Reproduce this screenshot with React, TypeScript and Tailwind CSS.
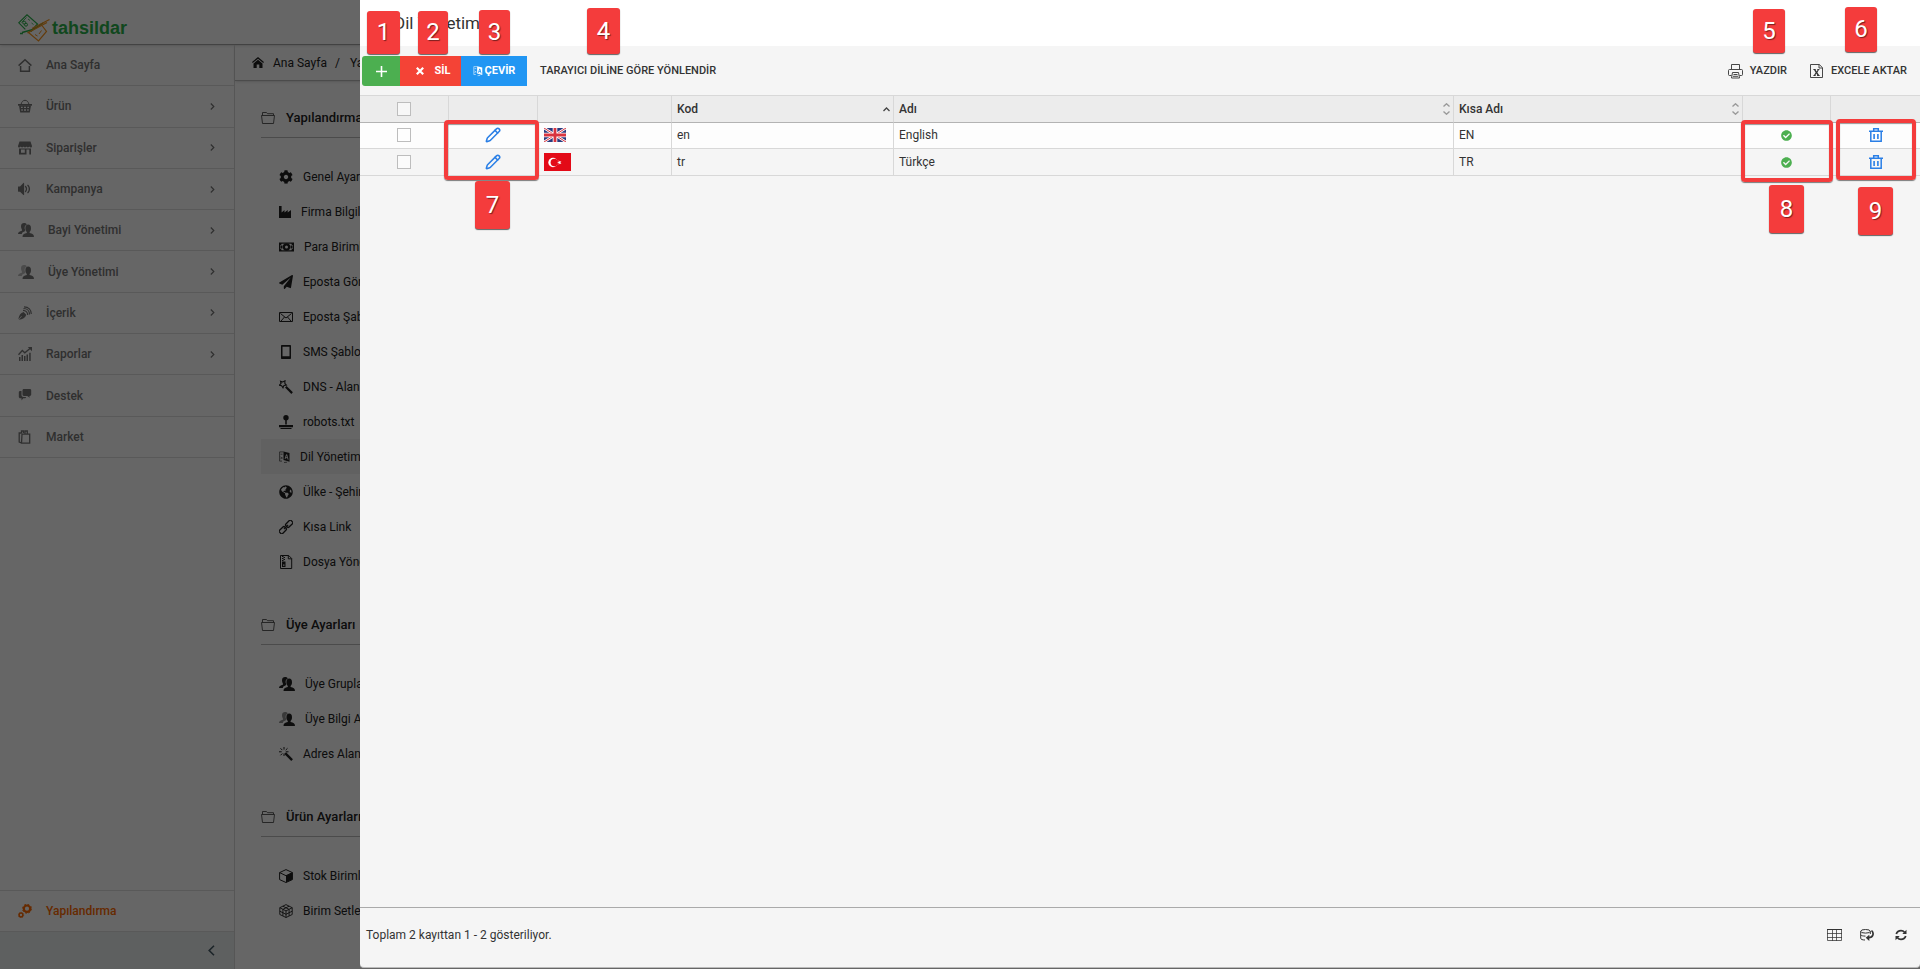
import type { ReactNode } from "react";
import { FaCog, FaPaperPlane, FaGlobeAmericas, FaCheckCircle } from "react-icons/fa";
import { ImVolumeMedium } from "react-icons/im";
import { Pencil } from "lucide-react";

type IconProps = { className?: string; children: ReactNode; box?: string };

function Svg({ className = "h-[14px] w-[14px]", box = "0 0 14 14", children }: IconProps) {
  return (
    <svg viewBox={box} className={`shrink-0 ${className}`} fill="currentColor" aria-hidden="true">
      {children}
    </svg>
  );
}

const stroke = { fill: "none", stroke: "currentColor" } as const;

const HomeIcon = () => (
  <Svg>
    <path {...stroke} strokeWidth="1.500" d="M.6 7.600 7 1.800l6.400 5.800M2.600 8v5.200h8.800V8" />
  </Svg>
);

const BasketIcon = () => (
  <Svg>
    <path {...stroke} strokeWidth="1" d="M3 5.500C3.600 2.600 5.200 1.300 7 1.300s3.400 1.300 4 4.200" />
    <path d="M0 5h14v1.700H0z" />
    <path
      fillRule="evenodd"
      d="M1 6.500h12L11.800 13.500H2.200zM3 7.700v1.300h1.700V7.700zM6 7.700v1.300h2V7.700zM9.300 7.700v1.300H11V7.700zM3.300 10.200v1.600h1.500v-1.600zM6 10.200v1.600h2v-1.600zM9.200 10.200v1.600h1.500v-1.600z"
    />
  </Svg>
);

const StoreIcon = () => (
  <Svg>
    <path d="M1.500.500h11L14 5c0 1-.6 1.500-1.300 1.500S11.300 6 11.300 5.300c0 .7-.7 1.200-1.400 1.200S8.500 6 8.500 5.300C8.500 6 7.800 6.500 7 6.500S5.500 6 5.500 5.300c0 .7-.6 1.200-1.400 1.200S2.700 6 2.700 5.300C2.700 6 2 6.500 1.300 6.500S0 6 0 5z" />
    <path fillRule="evenodd" d="M1 7.500h12v6H1zM3 8.500v3.300h3.800V8.500zM8.500 8.500v5h2.800v-5z" />
  </Svg>
);

const UsersIcon = ({ faded = false }: { faded?: boolean }) => (
  <Svg className="h-[14px] w-[16px]" box="0 0 16 14">
    <g opacity={faded ? 0.5 : 1}>
      <path d="M3 3.200C3 1 4.300 0 6 0s2.600.6 2.800 1.500C6.500 2.300 6 5 7.300 7.200L6.500 8.500C4.600 8.900 4 9.700 3.800 11H0c0-2 1.500-2.500 3.900-3.300V6.500C3.300 5.700 3 4.500 3 3.200z" />
    </g>
    <path d="M7.400 5.200C7.400 3 8.400 1.600 10.200 1.600S13 3 13 5.200c0 1.600-.5 2.900-1.400 3.700v1.100c2.800.4 4.400 1.300 4.400 4H4.500c0-2.700 1.600-3.600 4.300-4V8.900c-.9-.8-1.400-2.100-1.400-3.700z" />
  </Svg>
);

const FeedPenIcon = () => (
  <Svg>
    <path d="M.3 13.400C1 9.500 2.400 6.800 5.600 6L8.300 8.700C7.400 11.800 4.700 13 .8 13.800l3-3.300-.4-.4z" />
    <path {...stroke} strokeWidth="1.200" d="M5 4.300c2.700 0 4.700 2 4.700 4.800M5.500 2.500c3.600 0 6 2.500 6 6M6 .8c4.500 0 7.300 3 7.300 7.300" />
  </Svg>
);

const StatsIcon = () => (
  <Svg>
    <path {...stroke} strokeWidth="1.300" d="M.5 7.800 4.300 3.500l2.500 2.300L12.600 1" />
    <path d="M9.800 0H14v4.200zM1 10h1.500v4H1zM3.500 8H5v6H3.500zM6 9h1.500v5H6zM8.500 7.500H10V14H8.500zM11.200 5.800h1.500V14h-1.500z" />
  </Svg>
);

const BubblesIcon = () => (
  <Svg>
    <path d="M5.800 0h6C12.700 0 13.200.6 13.200 1.400v4.200c0 .8-.5 1.400-1.400 1.400h-.4l.3 1.800L9.200 7H5.800C5 7 4.500 6.400 4.500 5.600V1.400C4.500.6 5 0 5.800 0z" />
    <path d="M3.500 2v4c0 1.300.8 2 2 2h2.700c-.2.9-.8 1.300-1.500 1.300H5.300L3.500 11.500V9.300H2.400C1.300 9.300.8 8.700.8 7.800V3.500C.8 2.500 1.300 2 2.400 2z" />
  </Svg>
);

const BagIcon = () => (
  <Svg>
    <path {...stroke} strokeWidth="1.300" d="M4 4.200h7.700v9H3.500zM3.500 13 1.200 12V3h2.500M3.500 3V1h2v2M7 3.800V1h2.300v2.800" />
  </Svg>
);

const FactoryIcon = () => (
  <Svg className="h-[14px] w-[12px]" box="0 0 12 14">
    <path d="M0 1h2.600v6.500L5.500 5v2.500L8.700 5v2.500L12 5v8H0z" />
  </Svg>
);

const CashIcon = () => (
  <Svg className="h-[14px] w-[15px]" box="0 0 15 14">
    <path fillRule="evenodd" d="M0 2.500h15v9H0zM2.600 3.700c0 .8-.6 1.300-1.400 1.300v4c.8 0 1.400.5 1.400 1.300h9.800c0-.8.6-1.300 1.400-1.300V5c-.8 0-1.400-.5-1.400-1.300z" />
    <circle cx="7.500" cy="7" r="2.600" {...stroke} strokeWidth="2.200" />
    <path d="M1.500 5.500h2v3h-2zM11.500 5.500h2v3h-2z" />
  </Svg>
);

const EnvelopeIcon = () => (
  <Svg>
    <path {...stroke} strokeWidth="1" d="M.5 2.500h13v9H.5zM1.500 3.500 7 8l5.500-4.500M2 11l3.500-4M12 11 8.500 7" />
  </Svg>
);

const TabletIcon = () => (
  <Svg>
    <path fillRule="evenodd" d="M2 1c0-.6.4-1 1-1h8c.6 0 1 .4 1 1v12c0 .6-.4 1-1 1H3c-.6 0-1-.4-1-1zm1.500.8v9.500h7V1.800z" />
  </Svg>
);

const WandStarIcon = () => (
  <Svg>
    <path {...stroke} strokeWidth="1.100" d="m1.500 1.200 2.300.8L6 .8 5.800 3.300l1.600 1.800-2.400.3-1 2.400-1.400-2.100L.3 5.200 2 3.500z" />
    <path {...stroke} strokeWidth="2.200" d="m6.800 6.800 6.300 6.300" />
  </Svg>
);

const WandIcon = () => (
  <Svg>
    <path {...stroke} strokeWidth="1" d="M5 0v2.600M5 6.500V9M0 4.800h2.700M6.800 4.800h2.700M1.500 1.300l1.800 1.800M8.500 1.300 6.700 3.100M1.500 8.300l1.800-1.800" />
    <path {...stroke} strokeWidth="2.400" d="m6.200 6.200 6.900 6.900" />
  </Svg>
);

const JoystickIcon = () => (
  <Svg>
    <circle cx="7" cy="2.700" r="2.700" />
    <path d="M6.200 4h1.600v5.500H6.200zM0 10h14v2.300H0zM1.500 13h11v1h-11z" />
  </Svg>
);

const TranslateIcon = ({ className = "h-[14px] w-[11px]" }: { className?: string }) => (
  <Svg className={className} box="0 0 11 14">
    <path {...stroke} strokeWidth=".8" opacity=".8" d="M4.500 1.900H.6v9.200H3M1.500 4.200h2M1.500 9.200l1.800-2M1.500 6.700l1.800 2M5 12.500l3-.3" />
    <path fillRule="evenodd" d="M4.500 1.500 10.500 3v8.800L4.500 10zM7.100 4.200 5.600 8.800l.9.300.4-1.200 1.400.4.300 1.200 1 .3-1.400-5.200zM7.600 5.500l.5 1.900-1-.3z" />
  </Svg>
);

const LinkIcon = () => (
  <Svg>
    <g transform="rotate(-45 7 7)" {...stroke} strokeWidth="1.300">
      <rect x="-1.200" y="4.800" width="7.400" height="4.400" rx="1.300" />
      <rect x="7.800" y="4.800" width="7.400" height="4.400" rx="1.300" />
      <path d="M4 7h6" />
    </g>
  </Svg>
);

const ZipIcon = () => (
  <Svg>
    <path {...stroke} strokeWidth="1" d="M1.500.5h8.200l3 3v10H1.500zM9.300.5v3.300h3.400" />
    <path d="M3 1h1.500v1H3zM4.500 2H6v1H4.500zM3 3h1.500v1H3zM4.500 4H6v1H4.500zM3 5h1.500v1H3z" />
    <path fillRule="evenodd" d="M3 6.500h3.500V12H3zM4 9.500v1.300h1.500V9.500z" />
  </Svg>
);

const FolderIcon = () => (
  <Svg className="h-[14px] w-[14px] opacity-80">
    <path {...stroke} strokeWidth=".9" d="M1.500 4.500V1.500h4l1 1.200h6v1.800M.5 4.500h13l-1 8H1.500z" />
  </Svg>
);

const BoxIcon = () => (
  <Svg>
    <path {...stroke} strokeWidth="1" d="M7 .6.6 3.600v7L7 13.500l6.400-2.900v-7zM.6 3.600 7 6.700l6.400-3.100" />
    <path d="m7 6.700 6.400-3.100v7L7 13.500z" />
  </Svg>
);

const CubeIcon = () => (
  <Svg>
    <path
      {...stroke}
      strokeWidth=".9"
      d="M7 .6.8 3.700v6.800L7 13.500l6.200-3V3.700zM.8 3.700 7 6.900l6.200-3.200M7 6.900v6.600M3.900 2.200l6.200 3.200v6.500M10.100 2.200 3.900 5.400v6.500M.8 7.200 7 10.300l6.200-3.100"
    />
  </Svg>
);

const GearsIcon = () => (
  <Svg>
    <circle cx="9" cy="4.700" r="3.200" {...stroke} strokeWidth="2.200" />
    <circle cx="9" cy="4.700" r="4.500" {...stroke} strokeWidth="1" strokeDasharray="1.800 1.730" />
    <circle cx="3" cy="11" r="1.900" {...stroke} strokeWidth="1.500" />
    <circle cx="3" cy="11" r="2.700" {...stroke} strokeWidth=".6" strokeDasharray="1.100 1.020" />
  </Svg>
);

const PrinterIcon = () => (
  <Svg className="h-[15px] w-[15px]" box="0 0 15 15">
    <path {...stroke} strokeWidth=".9" d="M3.500 5V.5h8V5M3.500 11.500h-2a1 1 0 0 1-1-1v-4a1 1 0 0 1 1-1h12a1 1 0 0 1 1 1v4a1 1 0 0 1-1 1h-2M4.500 8.500h6l1 5.500h-8zM5.500 10.500h4M5 12.300h5" />
  </Svg>
);

const ExcelIcon = () => (
  <Svg className="h-[14px] w-[13px]" box="0 0 13 14">
    <path {...stroke} strokeWidth=".9" d="M.5.5h8.800l3.200 3.200v9.800H.5zM9 .5V4h3.500" />
    <path d="M3.200 5h2.600v.8h-.3L6.700 7.500l1-1.700h-.5V5h2.300v.8H9L7.400 8.400l1.800 2.800h.6v.8H7v-.8h.4L6.300 9.500l-1 1.700h.5v.8H3.300v-.8h.6l1.700-2.700-1.700-2.700h-.7z" />
  </Svg>
);

const TrashIcon = () => (
  <Svg>
    <path {...stroke} strokeWidth="1.500" d="M0 3.200h14M4.700 3V.8h4.600V3M1.800 3.500v9.700h10.400V3.500" />
    <path d="M4.300 6h1.600v5H4.300zM8.100 6h1.600v5H8.100z" />
  </Svg>
);

const GridIcon = () => (
  <Svg className="h-[12px] w-[15px]" box="0 0 15 12">
    <path {...stroke} strokeWidth="1" opacity=".75" d="M.5.5h14v11H.5zM0 4.500h15M0 8.500h15M5.500 0v12M9.500 0v12" />
    <path d="M0 0h15v1H0z" />
  </Svg>
);

const DatabaseIcon = () => (
  <Svg className="h-[12px] w-[14px]" box="0 0 14 12">
    <ellipse cx="5.500" cy="2.300" rx="4.800" ry="1.800" {...stroke} strokeWidth="1" />
    <path {...stroke} strokeWidth="1" d="M.7 2.300v7C.7 10.400 2.600 11 5 11M.7 5.800c.5.900 2.300 1.300 4.800 1.300M10.300 2.300V5" />
    <path {...stroke} strokeWidth="1.700" d="M11.500 1.500C14.200 4 13.500 8.500 8.500 8.600" />
    <path d="M9.300 5.700V12L5.700 8.700z" />
  </Svg>
);

const RefreshIcon = () => (
  <Svg className="h-[12px] w-[12px]" box="0 0 12 12">
    <path {...stroke} strokeWidth="1.800" d="M1.300 5C2 2.800 3.800 1.600 6 1.600c1.500 0 2.700.6 3.500 1.600M10.700 7c-.7 2.200-2.500 3.400-4.700 3.400-1.500 0-2.700-.6-3.500-1.600" />
    <path d="M11.500.8V5H7.300zM.5 11.200V7h4.200z" />
  </Svg>
);

const Chevron = () => (
  <Svg className="h-[7px] w-[5px]" box="0 0 5 7">
    <path {...stroke} strokeWidth="1.200" d="m.8.5 3 3-3 3" />
  </Svg>
);

const Logo = () => (
  <a href="#home" className="flex items-center" aria-label="tahsildar">
    <svg viewBox="0 0 32 28" className="h-[28px] w-[32px]" fill="none" aria-hidden="true">
      <path stroke="#2bb24c" strokeWidth="1.200" d="M13 17.500 19.500 10 9 .8.800 8.800l6.500 6.500" />
      <path stroke="#2bb24c" strokeWidth=".8" d="M8.500 3.500 3.500 8.500M10 5l2 1.500M13.500 9l2 1.500" />
      <path stroke="#2bb24c" strokeWidth="1.400" d="M4 18.500 15 15.500 25 9M2 19.500h3" />
      <path stroke="#f7941d" strokeWidth="1.400" d="M31.500 5.500 14 14.500M29 8.500 9.500 18.800" />
      <path stroke="#f7941d" strokeWidth="1.200" d="M10.500 18.500 20.500 27l8-9.500-4.500-6" />
      <path stroke="#f7941d" strokeWidth="1" d="m17 20.500 2.500 1.500M21 20l2.500-3.500" />
      <circle cx="6.200" cy="8.700" r="1.500" stroke="#2bb24c" />
      <circle cx="8" cy="10.700" r="1.500" stroke="#2bb24c" />
    </svg>
    <span className="ml-[2px] font-['Liberation_Sans',sans-serif] text-[18px] leading-[24px] font-bold text-[#2bb24c]">tahsildar</span>
  </a>
);

const menu: { label: string; icon: ReactNode; sub?: boolean }[] = [
  { label: "Ana Sayfa", icon: <HomeIcon /> },
  { label: "Ürün", icon: <BasketIcon />, sub: true },
  { label: "Siparişler", icon: <StoreIcon />, sub: true },
  { label: "Kampanya", icon: <ImVolumeMedium className="h-[14px] w-[14px]" />, sub: true },
  { label: "Bayi Yönetimi", icon: <UsersIcon />, sub: true },
  { label: "Üye Yönetimi", icon: <UsersIcon faded />, sub: true },
  { label: "İçerik", icon: <FeedPenIcon />, sub: true },
  { label: "Raporlar", icon: <StatsIcon />, sub: true },
  { label: "Destek", icon: <BubblesIcon /> },
  { label: "Market", icon: <BagIcon /> },
];

const sections: { title: string; items: { label: string; icon: ReactNode; active?: boolean }[] }[] = [
  {
    title: "Yapılandırma",
    items: [
      { label: "Genel Ayarlar", icon: <FaCog className="h-[14px] w-[14px]" /> },
      { label: "Firma Bilgileri", icon: <FactoryIcon /> },
      { label: "Para Birimleri", icon: <CashIcon /> },
      { label: "Eposta Gönderim", icon: <FaPaperPlane className="h-[14px] w-[14px]" /> },
      { label: "Eposta Şablonları", icon: <EnvelopeIcon /> },
      { label: "SMS Şablonları", icon: <TabletIcon /> },
      { label: "DNS - Alan Adı", icon: <WandStarIcon /> },
      { label: "robots.txt", icon: <JoystickIcon /> },
      { label: "Dil Yönetimi", icon: <TranslateIcon />, active: true },
      { label: "Ülke - Şehir", icon: <FaGlobeAmericas className="h-[14px] w-[14px]" /> },
      { label: "Kısa Link", icon: <LinkIcon /> },
      { label: "Dosya Yönetimi", icon: <ZipIcon /> },
    ],
  },
  {
    title: "Üye Ayarları",
    items: [
      { label: "Üye Grupları", icon: <UsersIcon /> },
      { label: "Üye Bilgi Alanları", icon: <UsersIcon faded /> },
      { label: "Adres Alanları", icon: <WandIcon /> },
    ],
  },
  {
    title: "Ürün Ayarları",
    items: [
      { label: "Stok Birimleri", icon: <BoxIcon /> },
      { label: "Birim Setleri", icon: <CubeIcon /> },
    ],
  },
];

function Sidebar() {
  return (
    <nav className="flex w-[235px] shrink-0 flex-col border-r border-[#d8d8d8] text-[12px] font-medium text-[#777]">
      <ul className="grid h-[413px] auto-rows-fr">
        {menu.map((m) => (
          <li key={m.label} className="border-b border-[#dedede]">
            <a href="#menu" className="flex h-full items-center gap-[14px] pr-[19px] pl-[18px]">
              {m.icon}
              <span className="flex-1">{m.label}</span>
              {m.sub && <Chevron />}
            </a>
          </li>
        ))}
      </ul>
      <a href="#settings" className="mt-auto flex h-[42px] items-center gap-[14px] border-y border-[#dedede] pl-[18px] text-[#ff6a00]">
        <GearsIcon />
        Yapılandırma
      </a>
      <button type="button" aria-label="Menüyü daralt" className="flex h-[37px] items-center justify-end bg-[#eceff1] pr-[19px] pb-px text-[#455a64]">
        <Svg className="h-[11px] w-[7px]" box="0 0 7 11">
          <path {...stroke} strokeWidth="1.600" d="m6 .8-4.800 4.700L6 10.200" />
        </Svg>
      </button>
    </nav>
  );
}

function SettingsPage() {
  return (
    <main className="min-w-0 flex-1 text-[#222]">
      <div className="flex h-[36px] items-center border-b border-[#bbb] pl-[17px] text-[12px] shadow-sm">
        <Svg className="h-[11px] w-[12px]" box="0 0 12 11">
          <path d="M6 0 0 5l.8 1L6 1.700 11.200 6l.8-1z" />
          <path d="M6 2.800 1.500 6.500V11h3.200V7.500h2.600V11h3.200V6.500z" />
        </Svg>
        <a href="#home" className="ml-[9px]">Ana Sayfa</a>
        <span className="mx-[8px]">/</span>
        <a href="#settings" className="ml-[2px]">Yapılandırma</a>
      </div>
      <div className="px-[26px] pt-[17px]">
        {sections.map((s) => (
          <section key={s.title} className="mb-[26px]">
            <h2 className="flex h-[40px] items-center gap-[11px] border-b border-[#bbb] text-[13px] font-medium">
              <FolderIcon />
              {s.title}
            </h2>
            <ul className="mt-[21px] text-[12px]">
              {s.items.map((i) => (
                <li key={i.label}>
                  <a href="#item" className={`flex h-[35px] items-center gap-[10px] pl-[18px] ${i.active ? "bg-[#f2f2f2]" : ""}`}>
                    {i.icon}
                    {i.label}
                  </a>
                </li>
              ))}
            </ul>
          </section>
        ))}
      </div>
    </main>
  );
}

const UkFlag = () => (
  <svg viewBox="0 0 22 14" className="block h-[14px] w-[22px]" role="img" aria-label="English">
    <path fill="#2b3a7e" d="M0 0h22v14H0z" />
    <path stroke="#fff" strokeWidth="2.600" d="m0 0 22 14M22 0 0 14" />
    <path stroke="#d8343f" strokeWidth="1" d="m0 0 22 14M22 0 0 14" />
    <path stroke="#fff" strokeWidth="4.600" d="M11 0v14M0 7h22" />
    <path stroke="#d8343f" strokeWidth="2.800" d="M11 0v14M0 7h22" />
  </svg>
);

const TrFlag = () => (
  <svg viewBox="0 0 27 18" className="block h-[18px] w-[27px]" role="img" aria-label="Türkçe">
    <path fill="#e30a17" d="M0 0h27v18H0z" />
    <circle cx="9" cy="9.500" r="4.700" fill="#fff" />
    <circle cx="10.300" cy="9.500" r="3.700" fill="#e30a17" />
    <path fill="#fff" d="m13 9.500 1.700-.6V7.300l1 1.300 1.700-.4-1 1.300 1 1.400-1.700-.5-1 1.300v-1.600z" />
  </svg>
);

const SortIcon = () => (
  <Svg className="h-[12px] w-[7px] text-[#999]" box="0 0 7 12">
    <path {...stroke} strokeWidth="1.400" d="m.5 3.500 3-2.700 3 2.700M.5 8.500l3 2.700 3-2.700" />
  </Svg>
);

const SortAscIcon = () => (
  <Svg className="h-[5px] w-[7px] text-[#444]" box="0 0 7 5">
    <path {...stroke} strokeWidth="1.300" d="m.5 4 3-3 3 3" />
  </Svg>
);

const Check = ({ label }: { label: string }) => (
  <input type="checkbox" aria-label={label} className="mx-auto block h-[14px] w-[14px] appearance-none border border-[#bdbdbd] bg-white/60" />
);

const rows = [
  { code: "en", name: "English", short: "EN", flag: <UkFlag /> },
  { code: "tr", name: "Türkçe", short: "TR", flag: <TrFlag /> },
];

function Header({ title, icon }: { title: string; icon: ReactNode }) {
  return (
    <th scope="col" className="border-r border-[#d8d8d8] pr-[3px] pl-[5px] font-medium">
      <div className="flex items-center justify-between">
        {title}
        {icon}
      </div>
    </th>
  );
}

function LanguageTable() {
  const cell = "border-r border-[#d8d8d8]";
  return (
    <table className="w-full table-fixed border-separate border-spacing-0 text-left text-[12px] leading-[16px]">
      <colgroup>
        <col className="w-[89px]" />
        <col className="w-[89px]" />
        <col className="w-[134px]" />
        <col className="w-[222px]" />
        <col />
        <col className="w-[289px]" />
        <col className="w-[88px]" />
        <col className="w-[89px]" />
      </colgroup>
      <thead>
        <tr className="h-[28px] bg-[#ececec] [&>th]:border-t [&>th]:border-b [&>th]:border-t-[#d8d8d8] [&>th]:border-b-[#b3b3b3]">
          <th scope="col" className={cell}><Check label="Tümünü seç" /></th>
          <th scope="col" className={cell} aria-label="Düzenle" />
          <th scope="col" className={cell} aria-label="Bayrak" />
          <Header title="Kod" icon={<SortAscIcon />} />
          <Header title="Adı" icon={<SortIcon />} />
          <Header title="Kısa Adı" icon={<SortIcon />} />
          <th scope="col" className={cell} aria-label="Durum" />
          <th scope="col" aria-label="Sil" />
        </tr>
      </thead>
      <tbody>
        {rows.map((r) => (
          <tr key={r.code} className="h-[26px] odd:bg-[#fdfdfd] even:h-[27px] [&>td]:border-b [&>td]:border-b-[#d8d8d8] odd:[&>td]:pb-px">
            <td className={cell}><Check label={r.name} /></td>
            <td className={cell}>
              <button type="button" aria-label="Düzenle" className="mx-auto block text-[#2a7fe6]">
                <Pencil className="h-[16px] w-[16px]" strokeWidth={2.3} />
              </button>
            </td>
            <td className={`${cell} pl-[6px]`}>{r.flag}</td>
            <td className={`${cell} pl-[5px]`}>{r.code}</td>
            <td className={`${cell} pl-[5px]`}>{r.name}</td>
            <td className={`${cell} pl-[5px]`}>{r.short}</td>
            <td className={cell}><FaCheckCircle className="mx-auto h-[11px] w-[11px] text-[#4caf50]" /></td>
            <td>
              <button type="button" aria-label="Sil" className="mx-auto block text-[#2a7fe6]"><TrashIcon /></button>
            </td>
          </tr>
        ))}
      </tbody>
    </table>
  );
}

const badges = [
  { n: 1, place: "left-[7px] top-[11px] h-[43px] w-[33px]" },
  { n: 2, place: "left-[58px] top-[11px] h-[43px] w-[30px]" },
  { n: 3, place: "left-[119px] top-[10px] h-[44px] w-[31px]" },
  { n: 4, place: "left-[227px] top-[8px] h-[46px] w-[33px]" },
  { n: 5, place: "right-[135px] top-[9px] h-[44px] w-[32px]" },
  { n: 6, place: "right-[43px] top-[7px] h-[45px] w-[32px]" },
  { n: 7, place: "left-[115px] top-[181px] h-[48px] w-[35px]" },
  { n: 8, place: "right-[116px] top-[185px] h-[48px] w-[35px]" },
  { n: 9, place: "right-[27px] top-[187px] h-[48px] w-[35px]" },
];

const frames = [
  "left-[84px] top-[120px] h-[60px] w-[95px]",
  "right-[87px] top-[120px] h-[62px] w-[92px]",
  "right-[4px] top-[119px] h-[61px] w-[80px]",
];

function Annotations() {
  return (
    <>
      {frames.map((f) => (
        <div key={f} className={`pointer-events-none absolute rounded-[4px] border-4 border-[#f43c3c] shadow-[0_1px_1px_rgba(0,0,0,0.5),inset_0_1px_1px_rgba(0,0,0,0.4)] ${f}`} />
      ))}
      {badges.map((b) => (
        <div
          key={b.n}
          className={`pointer-events-none absolute flex items-center justify-center rounded-[3px] bg-[#f43c3c] pb-px text-[24px] leading-[28px] text-white shadow-[0_1px_1px_rgba(0,0,0,0.6)] [text-shadow:1px_1px_1px_rgba(0,0,0,0.5)] ${b.place}`}
        >
          {b.n}
        </div>
      ))}
    </>
  );
}

function LanguageDrawer() {
  return (
    <div role="dialog" aria-label="Dil Yönetimi" className="absolute inset-y-0 right-0 left-[360px] bg-[#666] pb-[1px] text-[#333]">
      <div className="flex h-full flex-col rounded-b-[4px] border-b border-[#bbb] bg-[#f5f5f5]">
        <header className="flex h-[46px] shrink-0 items-center bg-white pl-[34px]">
          <h1 className="text-[17px] leading-[24px]">Dil Yönetimi</h1>
        </header>
        <div className="flex h-[49px] shrink-0 items-center px-[2px] pt-px text-[11px] font-medium">
          <button type="button" aria-label="Ekle" className="flex h-[30px] w-[38px] items-center justify-center rounded-l-[3px] bg-[#4caf50] text-white">
            <Svg className="h-[11px] w-[11px]" box="0 0 11 11">
              <path {...stroke} strokeWidth="1.600" d="M5.500 0v11M0 5.500h11" />
            </Svg>
          </button>
          <button type="button" className="flex h-[30px] w-[61px] items-center justify-center gap-[11px] bg-[#f44336] pl-[5px] font-bold text-white">
            <Svg className="h-[8px] w-[8px]" box="0 0 8 8">
              <path {...stroke} strokeWidth="2.200" d="m.8.8 6.400 6.400M7.200.8.8 7.200" />
            </Svg>
            SİL
          </button>
          <button type="button" className="flex h-[30px] w-[66px] items-center justify-center gap-[2px] bg-[#2196f3] font-bold text-white">
            <TranslateIcon className="h-[12px] w-[10px]" />
            ÇEVİR
          </button>
          <button type="button" className="ml-[13px]">TARAYICI DİLİNE GÖRE YÖNLENDİR</button>
          <button type="button" className="ml-auto flex items-center gap-[7px]">
            <PrinterIcon />
            YAZDIR
          </button>
          <button type="button" className="mr-[11px] ml-[23px] flex items-center gap-[8px]">
            <ExcelIcon />
            EXCELE AKTAR
          </button>
        </div>
        <LanguageTable />
        <footer className="mt-auto flex h-[60px] shrink-0 items-center border-t border-[#aaa] pr-[13px] pb-[6px] pl-[6px] text-[12px]">
          <p className="flex-1">Toplam 2 kayıttan 1 - 2 gösteriliyor.</p>
          <button type="button" aria-label="Sütunlar"><GridIcon /></button>
          <button type="button" aria-label="Görünümü sıfırla" className="ml-[18px]"><DatabaseIcon /></button>
          <button type="button" aria-label="Yenile" className="ml-[21px]"><RefreshIcon /></button>
        </footer>
      </div>
      <Annotations />
    </div>
  );
}

export default function App() {
  return (
    <div className="relative flex h-screen flex-col overflow-hidden bg-white font-['Roboto',sans-serif] leading-[16px]">
      <div className="flex h-[45px] shrink-0 items-center border-b border-[#a8a8a8] pt-[11px] pl-[18px] shadow-sm">
        <Logo />
      </div>
      <div className="flex min-h-0 flex-1">
        <Sidebar />
        <SettingsPage />
      </div>
      <div className="absolute inset-0 bg-black/60" />
      <LanguageDrawer />
    </div>
  );
}
